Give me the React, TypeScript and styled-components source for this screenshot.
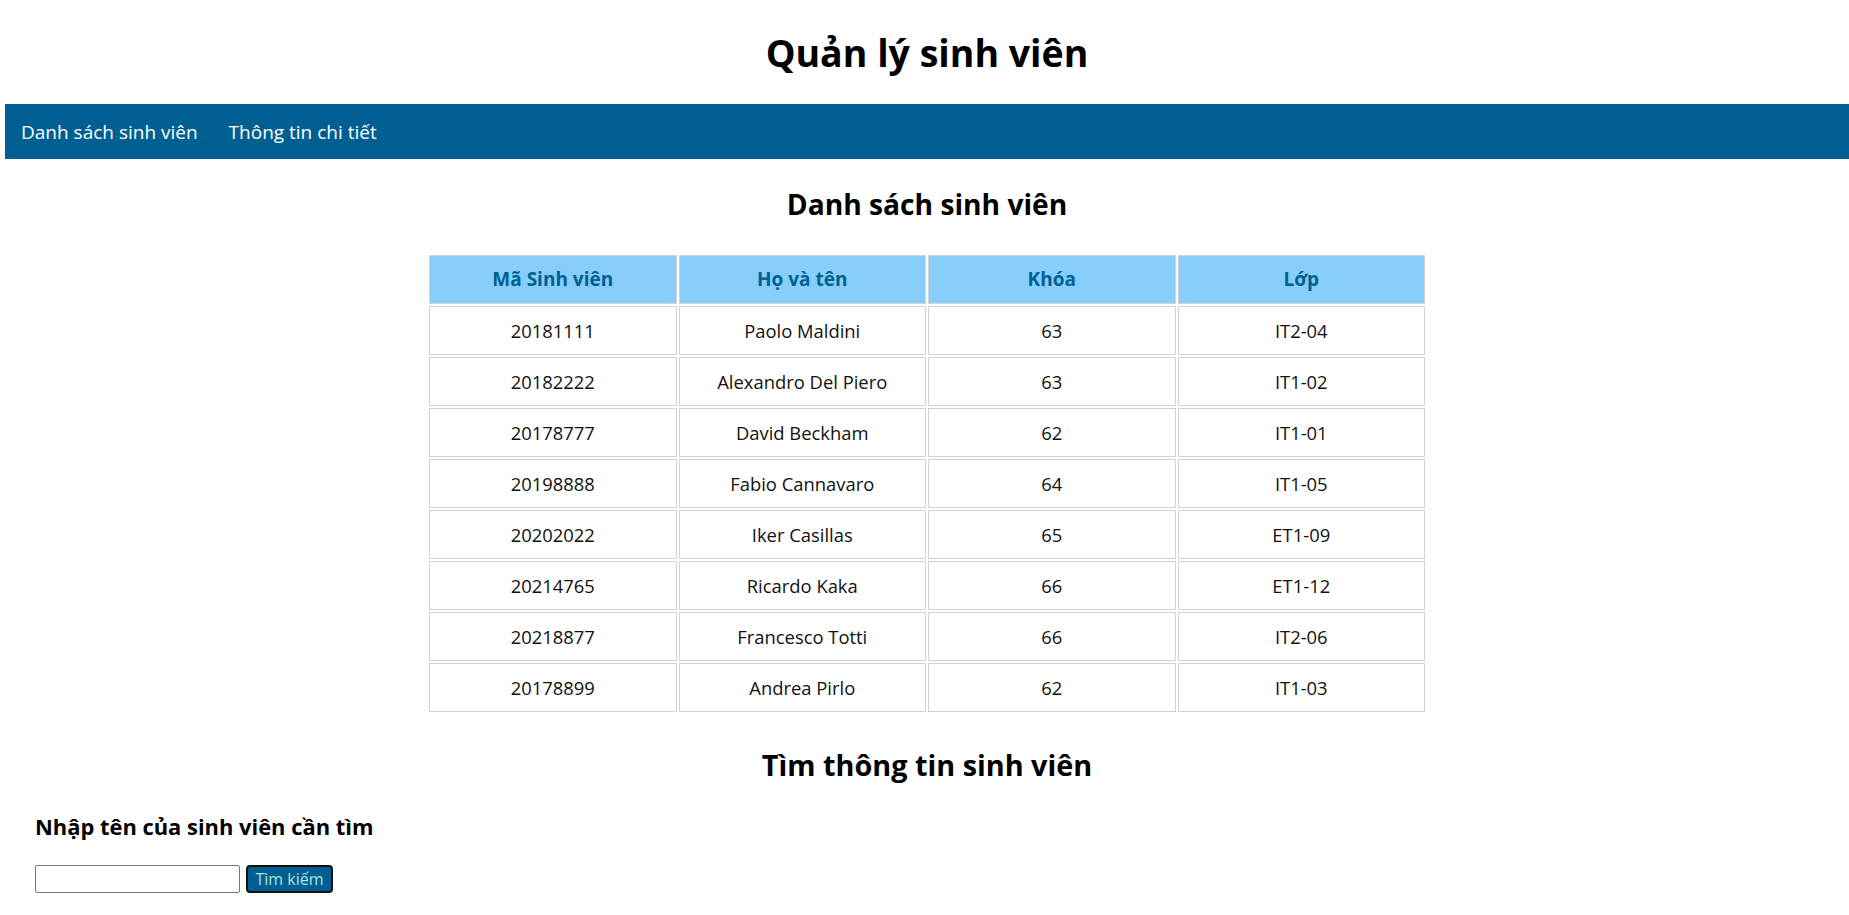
import React from "react";
import styled, { createGlobalStyle } from "styled-components";

const GlobalStyle = createGlobalStyle`
  html, body {
    margin: 0;
    padding: 0;
    background: #ffffff;
  }
  body {
    font-family: "Open Sans", "Noto Sans", sans-serif;
    color: #000;
  }
`;

const Page = styled.div`
  padding-left: 5px;
  display: flex;
  flex-direction: column;
`;

const Title = styled.h1`
  margin: 0;
  padding: 28px 0 26px;
  text-align: center;
  font-size: 37.5px;
  font-weight: 700;
  line-height: 50px;
`;

const Nav = styled.nav`
  display: flex;
  align-items: center;
  height: 55px;
  background: #005f92;
`;

const NavLink = styled.a`
  padding: 0 15.5px;
  font-size: 19px;
  color: #ffffff;
  text-decoration: none;
  cursor: pointer;

  &:first-child {
    padding-left: 16px;
  }
`;

const SectionTitle = styled.h2<{ $top: number; $bottom: number; $size: number }>`
  margin: ${(p) => p.$top}px 0 ${(p) => p.$bottom}px;
  text-align: center;
  font-size: ${(p) => p.$size}px;
  font-weight: 700;
  line-height: 38px;
`;

const Table = styled.table`
  width: 1000px;
  margin: 0 auto;
  border-collapse: separate;
  border-spacing: 2px;
  font-size: 18.4px;
`;

const HeadCell = styled.th`
  background: #87cefa;
  color: #005f92;
  font-size: 19px;
  font-weight: 700;
  border: 1px solid #d3d3d3;
  padding: 10px;
  line-height: 27px;
  width: 25%;
`;

const Cell = styled.td`
  border: 1px solid #d3d3d3;
  padding: 10px;
  line-height: 27px;
  text-align: center;
  color: #111;
`;

const SearchArea = styled.div`
  padding-left: 30px;
  display: flex;
  flex-direction: column;
`;

const SearchLabel = styled.h3`
  margin: 28px 0 24px;
  font-size: 21.9px;
  font-weight: 700;
  line-height: 29px;
`;

const SearchRow = styled.div`
  display: flex;
  align-items: center;
  gap: 6px;
`;

const SearchInput = styled.input`
  box-sizing: border-box;
  width: 205px;
  height: 28px;
  border: 1px solid #767676;
  border-radius: 2px;
  padding: 2px 4px;
  font-family: inherit;
  font-size: 16px;
`;

const SearchButton = styled.button`
  box-sizing: border-box;
  width: 87px;
  height: 28px;
  background: #005f92;
  color: #a8e4d8;
  border: 2px solid #111;
  border-radius: 4px;
  font-family: "Open Sans", sans-serif;
  font-size: 16px;
  padding: 0;
  line-height: 22px;
  cursor: pointer;
`;

const students = [
  ["20181111", "Paolo Maldini", "63", "IT2-04"],
  ["20182222", "Alexandro Del Piero", "63", "IT1-02"],
  ["20178777", "David Beckham", "62", "IT1-01"],
  ["20198888", "Fabio Cannavaro", "64", "IT1-05"],
  ["20202022", "Iker Casillas", "65", "ET1-09"],
  ["20214765", "Ricardo Kaka", "66", "ET1-12"],
  ["20218877", "Francesco Totti", "66", "IT2-06"],
  ["20178899", "Andrea Pirlo", "62", "IT1-03"],
];

export default function App() {
  return (
    <>
      <GlobalStyle />
      <Page>
        <Title>Quản lý sinh viên</Title>
        <Nav>
          <NavLink>Danh sách sinh viên</NavLink>
          <NavLink>Thông tin chi tiết</NavLink>
        </Nav>
        <SectionTitle $top={26} $bottom={30} $size={28.2}>
          Danh sách sinh viên
        </SectionTitle>
        <Table>
          <thead>
            <tr>
              <HeadCell>Mã Sinh viên</HeadCell>
              <HeadCell>Họ và tên</HeadCell>
              <HeadCell>Khóa</HeadCell>
              <HeadCell>Lớp</HeadCell>
            </tr>
          </thead>
          <tbody>
            {students.map((s) => (
              <tr key={s[0]}>
                {s.map((v, i) => (
                  <Cell key={i}>{v}</Cell>
                ))}
              </tr>
            ))}
          </tbody>
        </Table>
        <SectionTitle $top={32} $bottom={0} $size={28.8}>
          Tìm thông tin sinh viên
        </SectionTitle>
        <SearchArea>
          <SearchLabel>Nhập tên của sinh viên cần tìm</SearchLabel>
          <SearchRow>
            <SearchInput type="text" />
            <SearchButton>Tìm kiếm</SearchButton>
          </SearchRow>
        </SearchArea>
      </Page>
    </>
  );
}
